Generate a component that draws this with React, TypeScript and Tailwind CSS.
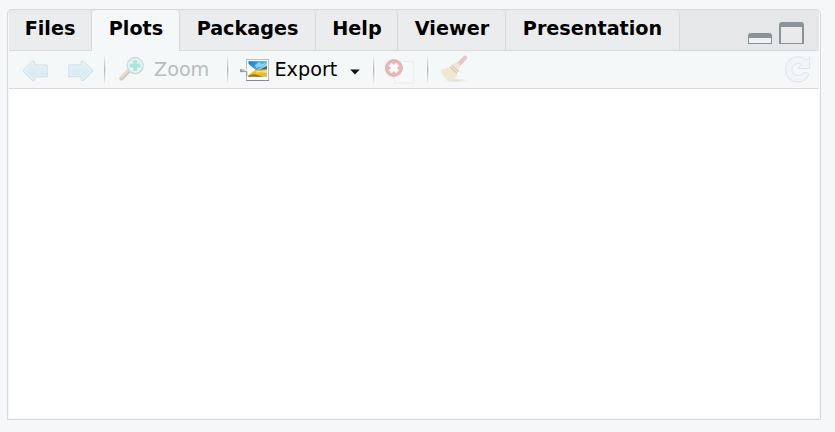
import React from "react";

const tabs = [
  { name: "Files", width: "w-[83px]" },
  { name: "Plots", width: "w-[88px] pl-px" },
  { name: "Packages", width: "w-[136px]" },
  { name: "Help", width: "w-[82px] pl-px" },
  { name: "Viewer", width: "w-[108px] pl-px" },
  { name: "Presentation", width: "w-[174px]" },
];

function Tab({ name, width, active }: { name: string; width: string; active: boolean }) {
  return (
    <div
      className={`${width} flex shrink-0 justify-center rounded-t-[5px] border-r border-[#d6dadc] pt-[7px] text-[19.2px] leading-[23px] font-bold text-black ${
        active ? "h-[41px] bg-[#f4f8f9]" : "h-[40px] bg-[#ebeced]"
      }`}
    >
      {name}
    </div>
  );
}

function Separator({ className }: { className: string }) {
  return (
    <div className={`flex h-[28px] w-[3px] shrink-0 ${className}`}>
      <div className="w-px bg-linear-to-b from-[#f0f3f4] via-[#b4b8ba] to-[#f0f3f4]" />
      <div className="w-px bg-linear-to-b from-[#f4f8f9] via-[#dfe3e4] to-[#f4f8f9]" />
      <div className="w-px bg-white/60" />
    </div>
  );
}

function Arrow({ right = false }: { right?: boolean }) {
  return (
    <svg width="26" height="22" viewBox="0 0 26 22" className={right ? "-scale-x-100" : ""}>
      <defs>
        <linearGradient id={right ? "arrowR" : "arrowL"} x1="0" y1="0" x2="0" y2="1">
          <stop offset="0" stopColor="#e5f1f6" />
          <stop offset="1" stopColor="#d6e8f1" />
        </linearGradient>
      </defs>
      <path d="M.8 10.8 10.5 1Q12.8.2 12.8 2.5V5H25.2V16.8H12.8V19.5Q12.8 21.5 10.5 20.7Z" fill={`url(#${right ? "arrowR" : "arrowL"})`} stroke="#c9dee7" />
      <path d="M2.5 10.8 11.6 2V6.1H24.1V15.7H11.6V19.6Z" fill="none" stroke="#e8f4f8" strokeWidth=".7" />
    </svg>
  );
}

function ZoomIcon() {
  return (
    <svg width="26" height="26" viewBox="0 0 26 26">
      <path d="m2.4 22.6 7-7" stroke="#d8c6b9" strokeWidth="4.2" strokeLinecap="round" />
      <path d="m2 21.6 7-7" stroke="#eadbcf" strokeWidth="1.7" strokeLinecap="round" />
      <path d="m9 15.6 2-2" stroke="#cdd6da" strokeWidth="2" />
      <circle cx="16.2" cy="9.6" r="7.9" fill="#e6f1f5" stroke="#c8dae3" strokeWidth="1.7" />
      <circle cx="16.2" cy="9.6" r="6.8" fill="none" stroke="#edf5f8" strokeWidth=".8" />
      <path d="M16.2 4.3v10.6M10.9 9.6h10.6" stroke="#aae6dc" strokeWidth="3.8" />
    </svg>
  );
}

function ExportIcon() {
  return (
    <svg width="30" height="24" viewBox="0 0 30 24">
      <defs>
        <linearGradient id="sky" x1="0" y1="0" x2="1" y2="1">
          <stop offset="0" stopColor="#1778c9" />
          <stop offset=".48" stopColor="#43acec" />
          <stop offset=".65" stopColor="#c3ecf4" />
        </linearGradient>
        <linearGradient id="exportArrow" x1="0" y1="0" x2="1" y2="0">
          <stop offset="0" stopColor="#8b9093" />
          <stop offset=".42" stopColor="#f4f5f5" />
          <stop offset=".55" stopColor="#fff" />
        </linearGradient>
      </defs>
      <rect x="6.5" y="1.5" width="22" height="21" fill="#fff" stroke="#b9bec3" />
      <path d="M6 22.5h23" stroke="#888d91" />
      <path d="M8.5 3.2h18.5v15.6H8.5Z" fill="url(#sky)" />
      <path d="m15 7 4-3 3 2 4-2-3 4-7 2Z" fill="#a8ddf4" opacity=".75" />
      <path d="M8.5 12.5q9-2 18.5.7v5.6H8.5Z" fill="#eebc25" />
      <path d="M15 13.5q6-2 12-.5v2q-6-1.5-10-.2Z" fill="#f8df7c" />
      <path d="m8.5 17.3 6-1 6 1.5 3 1H8.5Z" fill="#927329" />
      <path d="m20 11.5 7-3.8v3l-4 1Z" fill="#426d42" />
      <path d="m17 12.2 10-1.3v1l-7 .7Z" fill="#7dad65" />
      <path d="M0 11.2h7V4.7l8.5 7L7 18.3v-4.8H0Z" fill="url(#exportArrow)" />
      <path d="M0 13.6h6.8v5" fill="none" stroke="#8c9194" strokeWidth=".9" />
    </svg>
  );
}

function RemoveIcon() {
  return (
    <svg width="31" height="29" viewBox="0 0 31 29">
      <path d="M9.5 4.5h19.2v21.5H9.5Z" fill="#f6f9fa" stroke="#e8ecee" />
      <circle cx="8.9" cy="11" r="9" fill="#e8b8b9" />
      <circle cx="8.9" cy="11" r="8" fill="none" stroke="#dfadae" strokeWidth=".7" />
      <path d="m5.2 7.3 7.4 7.4m0-7.4-7.4 7.4" stroke="#f8fbfb" strokeWidth="4.2" />
    </svg>
  );
}

function BroomIcon() {
  return (
    <svg width="29" height="29" viewBox="0 0 29 29">
      <defs>
        <radialGradient id="broomShade">
          <stop stopColor="#d9dedf" />
          <stop offset="1" stopColor="#f4f8f9" />
        </radialGradient>
      </defs>
      <ellipse cx="16" cy="25.5" rx="12" ry="2.2" fill="url(#broomShade)" />
      <path d="m18 10 7-7.2" stroke="#e9c6c8" strokeWidth="4.4" strokeLinecap="round" />
      <path d="m12.7 9.5 3-1.5q2-1 3.5.7t.2 3.4l-1.3 3.4Q16 22 12.5 27 4.5 25 .8 15.5q7-1 11.9-6Z" fill="#efe8d3" stroke="#e7dec8" strokeWidth=".5" />
      <path d="m12 10.5 6.5 6M10.3 12.3l6.5 6" stroke="#dcc9b8" strokeWidth="1.3" />
      <path d="m9 14-3.5 6M11.5 16 9 24M14 18l-2.5 7" stroke="#e8e0ca" strokeWidth=".5" />
    </svg>
  );
}

function RefreshIcon() {
  return (
    <svg width="26" height="27" viewBox="0 0 26 27">
      <path
        d="M21.2 4.2 24.7.8V12.4H12.8L16.8 8.3Q12.5 5.7 8.8 8.8 6.1 11.5 7.1 15.2 8.5 19.4 12.9 19.7 16 19.8 18.2 17.2L20 16.5 24 18Q21.5 25.6 13.3 26 .5 25.5.6 13 1 1.5 13.2.7 17.8.6 21.2 4.2Z"
        fill="#f1f5f9"
        stroke="#e0e4e9"
      />
    </svg>
  );
}

export default function App() {
  return (
    <main className="h-[432px] w-[835px] overflow-hidden bg-[#f5f7f9] pt-[9px] pl-[7px] font-['DejaVu_Sans',sans-serif]">
      <section className="flex h-[411px] w-[814px] flex-col rounded-t-[5px] border border-[#d6dadc] bg-[#f7f8fa] px-px pb-px">
        <header className="flex h-[41px] shrink-0 rounded-t-[4px] bg-[#d6dadc]">
          <div className="flex h-[40px] w-full rounded-t-[4px] bg-[#e6e7e8]">
            {tabs.map((tab) => (
              <Tab key={tab.name} {...tab} active={tab.name === "Plots"} />
            ))}
            <div className="flex flex-1 items-end justify-end gap-[7px] pr-[15px] pb-[6px]">
              <div className="h-[11px] w-[24px] rounded-t-[3px] border border-t-[5px] border-[#899398] bg-[#f0f1f2] outline-[0.5px] -outline-offset-[1.5px] outline-[#899398]/30" />
              <div className="h-[22px] w-[25px] rounded-t-[3px] border-2 border-t-[5px] border-b-[1px] border-[#899398] bg-[#e9eaeb]" />
            </div>
          </div>
        </header>
        <nav className="flex h-[38px] shrink-0 items-start border-b border-[#d6dadc] bg-[#f4f8f9] text-[19.2px] leading-[22px]">
          <div className="mt-[9px] ml-[13px]"><Arrow /></div>
          <div className="mt-[9px] ml-[20px]"><Arrow right /></div>
          <Separator className="mt-[5px] ml-[10px]" />
          <div className="mt-[5px] ml-[12px]"><ZoomIcon /></div>
          <span className="mt-[8px] ml-[9px] w-[57px] text-[#b8bdbe]">Zoom</span>
          <Separator className="mt-[5px] ml-[16px]" />
          <div className="mt-[7px] ml-[10px]"><ExportIcon /></div>
          <span className="mt-[8px] ml-[4.5px] w-[65px] text-black">Export</span>
          <svg className="mt-[18px] ml-[10px]" width="10" height="6" viewBox="0 0 10 6"><path d="M.2.5h9.6L5 5.5Z" fill="#111" /></svg>
          <Separator className="mt-[5px] ml-[13.5px]" />
          <div className="mt-[6px] ml-[9px]"><RemoveIcon /></div>
          <Separator className="mt-[5px] ml-[11px]" />
          <div className="mt-[4px] ml-[10px]"><BroomIcon /></div>
          <div className="mt-[5px] mr-[8.5px] ml-auto"><RefreshIcon /></div>
        </nav>
        <div className="flex-1 bg-white" />
      </section>
    </main>
  );
}
